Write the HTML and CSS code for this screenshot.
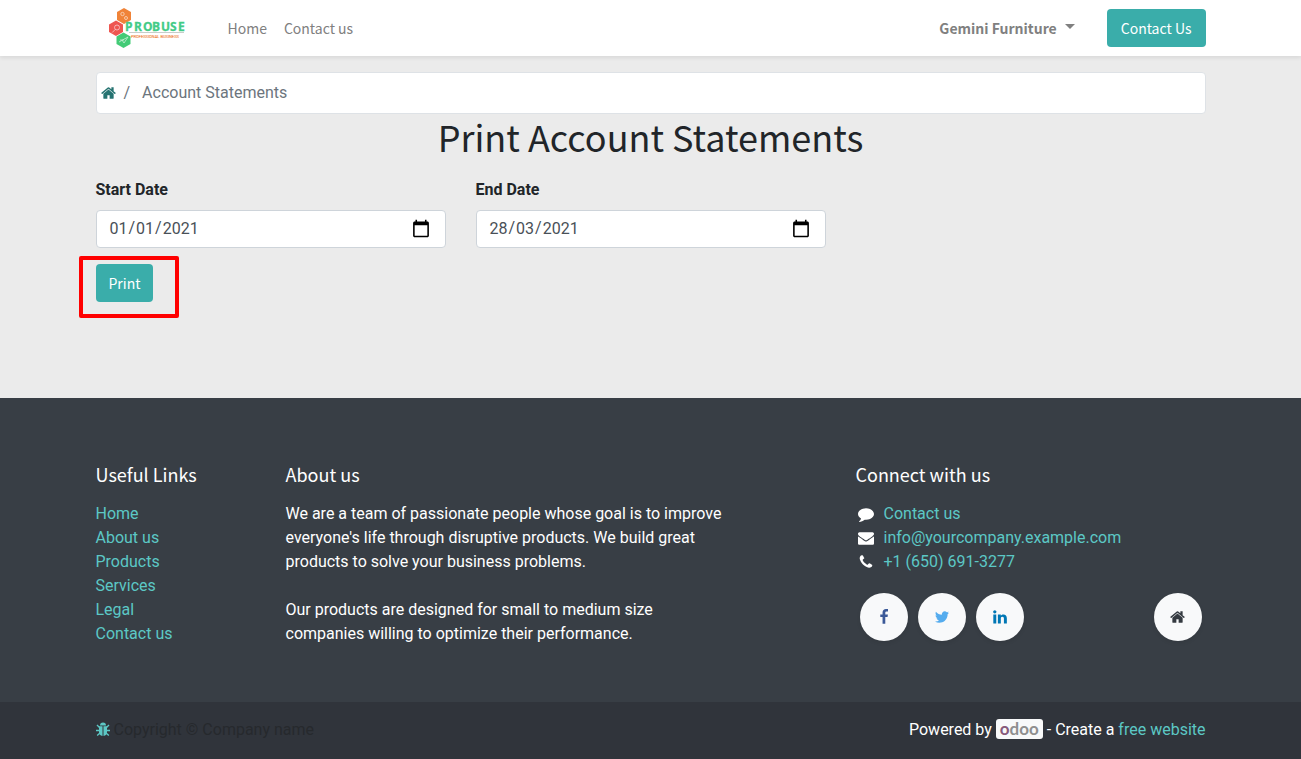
FILE: index.html
```
<!DOCTYPE html>
<html lang="en-GB">
<head>
<meta charset="utf-8">
<meta name="viewport" content="width=device-width, initial-scale=1">
<title>Account Statements</title>
<link rel="stylesheet" href="styles.css">
</head>
<body>
<svg class="sprite" aria-hidden="true">
  <symbol id="home" viewBox="0 0 1664 1792"><path d="M1408 992v480q0 26-19 45t-45 19h-384v-384h-256v384h-384q-26 0-45-19t-19-45v-480q0-1 .5-3t.5-3l575-474 575 474q1 2 1 6zm223-69l-62 74q-8 9-21 11h-3q-13 0-21-7l-692-577-692 577q-12 8-24 7-13-2-21-11l-62-74q-8-10-7-23.500t11-21.500l719-599q32-26 76-26t76 26l244 204v-195q0-14 9-23t23-9h192q14 0 23 9t9 23v408l219 182q10 8 11 21.500t-7 23.500z"/></symbol>
</svg>
<header class="header">
  <nav class="container nav">
    <a class="logo" href="#" aria-label="Probuse">
      <svg width="80" height="40" viewBox="0 0 80 40">
        <path fill="#f08338" d="M19 0l7 4v8l-7 4-7-4V4z"/>
        <path fill="#ee5650" d="M11 12.500l7 4v7.500l-7 4-7-4v-7.500z"/>
        <path fill="#43cb76" d="M18.500 24.500l7 4V36l-7 4-7-4v-7.500z"/>
        <g fill="none" stroke="#fff" stroke-width=".8" opacity=".7">
          <circle cx="17.500" cy="6" r="1.700"/><circle cx="21" cy="10" r="1.500"/>
          <circle cx="12" cy="19.500" r="2.500"/><path d="M10.200 21.500l-3 3M14 34l9-5-4 6-2-3M15 32h4"/>
        </g>
        <text class="logo-name" x="20 29 38 47 56 65 73" y="23">PROBUSE</text>
        <path stroke="#c8cdca" stroke-width="1" d="M24 24.500h55"/>
        <text class="logo-tag" x="26" y="30">PROFESSIONAL BUSINESS</text>
      </svg>
    </a>
    <ul class="menu">
      <li><a href="#">Home</a></li>
      <li><a href="#">Contact us</a></li>
    </ul>
    <button class="user" type="button">Gemini Furniture<span class="caret"></span></button>
    <a class="btn btn-wide" href="#">Contact Us</a>
  </nav>
</header>
<main class="container main">
  <ol class="breadcrumb">
    <li><a href="#" aria-label="Home"><svg class="icon" width="15" height="16"><use href="#home"/></svg></a></li>
    <li class="slash">/</li>
    <li>Account Statements</li>
  </ol>
  <h1>Print Account Statements</h1>
  <form>
    <div class="fields">
      <div class="field"><label for="start">Start Date</label><input id="start" type="date" value="2021-01-01"></div>
      <div class="field"><label for="end">End Date</label><input id="end" type="date" value="2021-03-28"></div>
    </div>
    <div class="print"><button class="btn" type="button">Print</button><span class="highlight"></span></div>
  </form>
</main>
<footer class="footer">
  <div class="container columns">
    <section class="links">
      <h2>Useful Links</h2>
      <ul>
        <li><a href="#">Home</a></li>
        <li><a href="#">About us</a></li>
        <li><a href="#">Products</a></li>
        <li><a href="#">Services</a></li>
        <li><a href="#">Legal</a></li>
        <li><a href="#">Contact us</a></li>
      </ul>
    </section>
    <section class="about">
      <h2>About us</h2>
      <p>We are a team of passionate people whose goal is to improve everyone's life through disruptive products. We build great products to solve your business problems.</p>
      <p>Our products are designed for small to medium size companies willing to optimize their performance.</p>
    </section>
    <section class="connect">
      <h2>Connect with us</h2>
      <ul>
        <li><svg class="icon" width="16" height="16" viewBox="0 0 1792 1792"><path d="M1792 896q0 174-120 321.500t-326 233-450 85.500q-70 0-145-8-198 175-460 242-49 14-114 22-17 2-30.500-9t-17.500-29v-1q-3-4-.5-12t2-10 4.500-9.500l6-9 7-8.500 8-9q7-8 31-34.500t34.500-38 31-39.500 32.500-51 27-59 26-76q-157-89-247.500-220t-90.500-281q0-130 71-248.500t191-204.500 286-136.500 348-50.500q244 0 450 85.500t326 233 120 321.500z"/></svg><a href="#">Contact us</a></li>
        <li><svg class="icon" width="16" height="16" viewBox="0 0 1792 1792"><path d="M1792 710v794q0 66-47 113t-113 47h-1472q-66 0-113-47t-47-113v-794q44 49 101 87 362 246 497 345 57 42 92.500 65.500t94.500 48 110 24.500h2q51 0 110-24.500t94.500-48 92.500-65.500q170-123 498-345 57-39 100-87zm0-294q0 79-49 151t-122 123q-376 261-468 325-10 7-42.500 31t-54 38.500-52 32.500-57.500 27-50 9h-2q-23 0-50-9t-57.500-27-52-32.500-54-38.500-42.500-31q-91-64-262-182.500t-205-142.500q-62-42-117-115.500t-55-136.500q0-78 41.500-130t118.500-52h1472q65 0 112.500 47t47.500 113z"/></svg><a href="#">info@yourcompany.example.com</a></li>
        <li><svg class="icon" width="16" height="16" viewBox="0 0 1792 1792"><path d="M1600 1240q0 27-10 70.500t-21 68.500q-21 50-122 106-94 51-186 51-27 0-53-3.500t-57.500-12.500-47-14.500-55.500-20.500-49-18q-98-35-175-83-127-79-264-216t-216-264q-48-77-83-175-3-9-18-49t-20.500-55.500-14.500-47-12.500-57.500-3.500-53q0-92 51-186 56-101 106-122 25-11 68.500-21t70.500-10q14 0 21 3 18 6 53 76 11 19 30 54t35 63.500 31 53.500q3 4 17.500 25t21.500 35.500 7 28.500q0 20-28.500 50t-62 55-62 53-28.500 46q0 9 5 22.500t8.500 20.500 14 24 11.500 19q76 137 174 235t235 174q2 1 19 11.500t24 14 20.500 8.500 22.500 5q18 0 46-28.500t53-62 55-62 50-28.500q14 0 28.500 7t35.500 21.500 25 17.500q25 15 53.500 31t63.500 35 54 30q70 35 76 53 3 7 3 21z"/></svg><a href="#">+1 (650) 691-3277</a></li>
      </ul>
      <div class="social">
        <a class="facebook" href="#" aria-label="Facebook"><svg class="icon" width="16" height="16" viewBox="0 0 1792 1792"><path d="M1343 12v264h-157q-86 0-116 36t-30 108v189h293l-39 296h-254v759h-306v-759h-255v-296h255v-218q0-186 104-288.500t277-102.500q147 0 228 12z"/></svg></a>
        <a class="twitter" href="#" aria-label="Twitter"><svg class="icon" width="16" height="16" viewBox="0 0 1792 1792"><path d="M1684 408q-67 98-162 167 1 14 1 42 0 130-38 259.500t-115.500 248.500-184.500 210.500-258 146-323 54.500q-271 0-496-145 35 4 78 4 225 0 401-138-105-2-188-64.500t-114-159.500q33 5 61 5 43 0 85-11-112-23-185.500-111.500t-73.500-205.500v-4q68 38 146 41-66-44-105-115t-39-154q0-88 44-163 121 149 294.500 238.500t371.500 99.500q-8-38-8-74 0-134 94.500-228.500t228.500-94.500q140 0 236 102 109-21 205-78-37 115-142 178 93-10 186-50z"/></svg></a>
        <a class="linkedin" href="#" aria-label="LinkedIn"><svg class="icon" width="16" height="16" viewBox="0 0 1792 1792"><path d="M477 625v991h-330v-991h330zm21-306q1 73-50.500 122t-135.500 49h-2q-82 0-132-49t-50-122q0-74 51.500-122.500t134.500-48.500 133 48.500 51 122.500zm1166 729v568h-329v-530q0-105-40.500-164.500t-126.500-59.500q-63 0-105.500 34.500t-63.500 85.500q-11 30-11 81v553h-329q2-399 2-647t-1-296l-1-48h329v144h-2q20-32 41-56t56.500-52 87-43.500 114.500-15.500q171 0 275 113.500t104 332.500z"/></svg></a>
        <a class="site" href="#" aria-label="Home page"><svg class="icon" width="15" height="16"><use href="#home"/></svg></a>
      </div>
    </section>
  </div>
  <div class="bottom">
    <div class="container bottom-row">
      <div class="copyright">
        <a href="#" aria-label="Debug"><svg class="icon" width="14" height="16" viewBox="0 0 14 16"><path d="M4 3.500a3 3 0 0 1 6 0zM3 4.300h3.500V14Q3 13.500 3 10zM7.500 4.300H11V10q0 3.500-3.500 4z"/><path fill="none" stroke="currentColor" stroke-width="1.400" d="M1 3l2.500 2.500M0 8.500h4M1.200 13.500L4 11M13 3l-2.500 2.500M14 8.500h-4M12.800 13.500L10 11"/></svg></a>
        <span>Copyright © Company name</span>
      </div>
      <div>Powered by <a class="odoo" href="#"><span>o</span>doo</a> - Create a <a href="#">free website</a></div>
    </div>
  </div>
</footer>
</body>
</html>
```
FILE: styles.css
```
*, *::before, *::after { box-sizing: border-box; }
:root {
  --display: "Source Sans Pro", "Noto Sans CJK JP", sans-serif;
  --teal: #3aadaa;
  --link: #5cc8c5;
}
body {
  margin: 0;
  display: flex;
  flex-direction: column;
  min-height: 100vh;
  background: #ebebeb;
  color: #212529;
  font: 16px/24px Roboto, sans-serif;
}
.sprite { display: none; }
.icon { display: block; flex: none; fill: currentColor; }
a { color: var(--link); text-decoration: none; }
ul, ol { margin: 0; padding: 0; list-style: none; }
.container { width: 100%; max-width: 1140px; margin: 0 auto; padding: 0 15px; }

.header { position: relative; background: #fff; box-shadow: 0 2px 4px rgba(0, 0, 0, .08); }
.nav { display: flex; align-items: center; height: 56px; font-family: var(--display); font-size: 14px; }
.logo { display: flex; margin-left: 9px; }
.logo-name { font: bold 12px "Open Sans", sans-serif; fill: #43cb86; stroke: #43cb86; stroke-width: .3px; }
.logo-tag { font: 4px Roboto, sans-serif; fill: #f08338; stroke: #f08338; stroke-width: .1px; }
.menu { display: flex; flex: 1; gap: 17px; margin-left: 43px; }
.menu a { color: #808080; }
.user {
  display: flex;
  align-items: center;
  gap: 8px;
  margin-right: 32px;
  padding: 0;
  border: 0;
  background: none;
  color: #808080;
  font: bold 14px/24px var(--display);
}
.caret { margin-bottom: 3px; border: 5px solid transparent; border-top-color: currentColor; border-bottom: 0; }
.btn {
  display: block;
  padding: 7px 13px;
  border: 0;
  border-radius: 4px;
  background: var(--teal);
  color: #fff;
  font: 14px/24px var(--display);
}
.btn-wide { padding: 7px 14px; }

.main { flex: 1; padding-top: 16px; padding-bottom: 96px; }
.breadcrumb {
  display: flex;
  align-items: center;
  gap: 8px;
  height: 42px;
  padding: 0 4px;
  border: 1px solid #dee2e6;
  border-radius: 4px;
  background: #fff;
  color: #6c757d;
}
.breadcrumb a { color: #267371; }
.slash { margin-right: 4px; }
h1 { margin: 0 0 20px; font: 36px/44px var(--display); text-align: center; }
.fields { display: grid; grid-template-columns: repeat(3, 1fr); gap: 30px; }
.field label { display: block; margin-bottom: 8px; font-weight: bold; }
.field input {
  display: block;
  width: 100%;
  height: 38px;
  padding: 6px 12px;
  border: 1px solid #ced4da;
  border-radius: 4px;
  background: #fff;
  color: #495057;
  font: inherit;
}
/* Day / month / year order regardless of the browser locale */
.field input::-webkit-datetime-edit-fields-wrapper { display: inline-grid; }
.field input::-webkit-datetime-edit-text { grid-row: 1; }
.field input::-webkit-datetime-edit-day-field { grid-area: 1 / 1; }
.field input::-webkit-datetime-edit-month-field { grid-area: 1 / 3; }
.field input::-webkit-datetime-edit-year-field { grid-area: 1 / 5; }
.field input::-webkit-calendar-picker-indicator { width: 20px; height: 20px; }
.print { position: relative; width: fit-content; margin-top: 16px; }
.print .btn { height: 38px; }
.highlight {
  position: absolute;
  inset: -8px -26px -16px -17px;
  border: 4px solid #f00;
  border-radius: 2px;
  pointer-events: none;
}

.footer { background: #383e45; color: #fff; }
.columns { display: grid; grid-template-columns: repeat(12, 1fr); column-gap: 30px; padding-top: 64px; padding-bottom: 56px; }
.columns h2 { margin: 0 0 16px; font: 18px/24px var(--display); }
.links { grid-column: span 2; }
.about { grid-column: span 6; }
.connect { grid-column: span 4; }
.about p { max-width: 445px; margin: 0 0 24px; }
.about p:last-child { margin: 0; }
.connect li { display: flex; align-items: center; gap: 10px; padding-left: 2px; }
.social { display: flex; gap: 10px; margin-top: 19px; padding: 0 4px; }
.social a {
  display: grid;
  place-items: center;
  width: 48px;
  height: 48px;
  border-radius: 50%;
  background: #f8f9fa;
  box-shadow: 0 2px 4px rgba(0, 0, 0, .08);
}
.social .facebook { color: #3b5998; }
.social .twitter { color: #55acee; }
.social .linkedin { color: #0077b5; }
.social .site { margin-left: auto; color: #343a40; }
.bottom { padding: 16px 0 17px; background: #30343b; }
.bottom-row { display: flex; justify-content: space-between; align-items: center; }
.copyright { display: flex; align-items: center; gap: 4px; color: #26292d; }
.odoo {
  display: inline-block;
  padding: 0 4px;
  border-radius: 3px;
  background: #f8f9fa;
  color: #8f8f8f;
  font: 17px/20px Lato, sans-serif;
  font-weight: bold;
}
.odoo span { color: #875a7b; }
```
